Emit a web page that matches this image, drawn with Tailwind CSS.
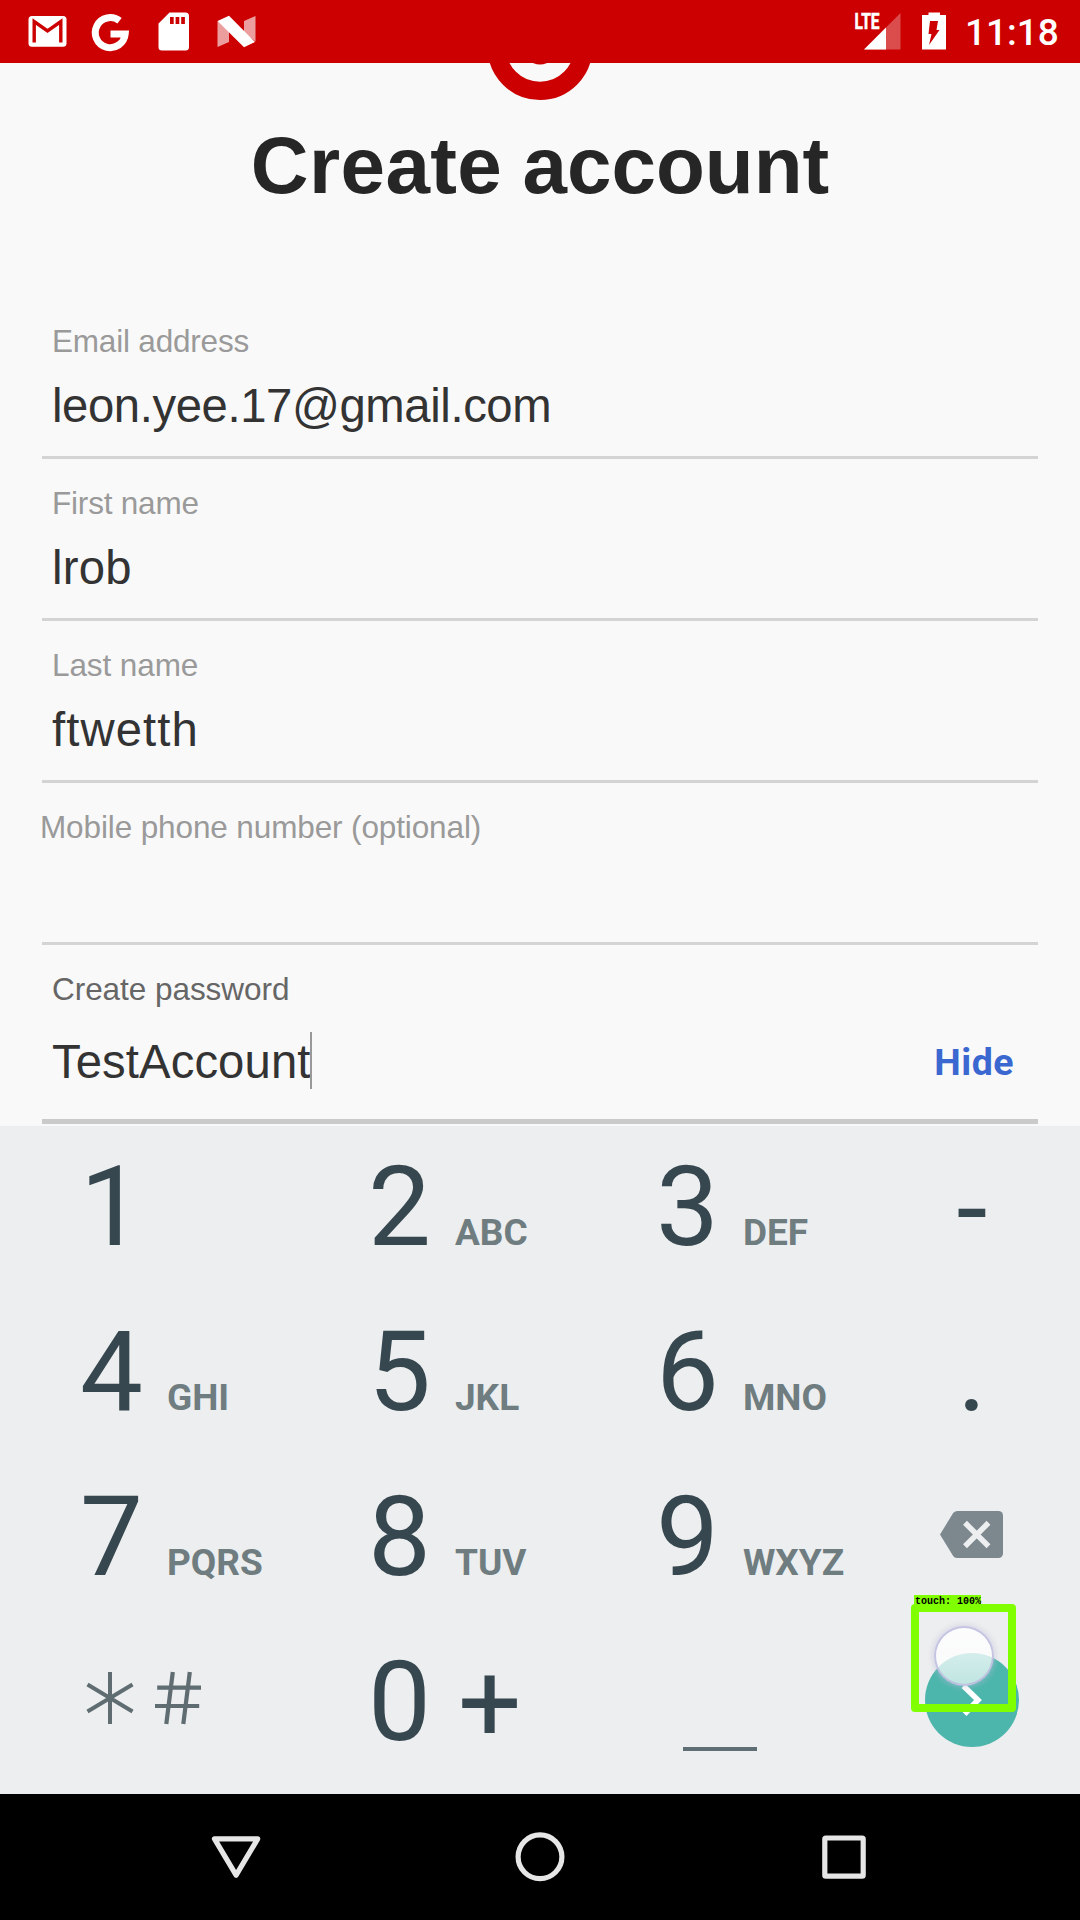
<!DOCTYPE html>
<html lang="en">
<head>
<meta charset="utf-8">
<title>Create account</title>
<script src="https://cdn.jsdelivr.net/npm/@tailwindcss/browser@4"></script>
</head>
<body class="bg-black">
<div class="relative w-[1080px] h-[1920px] overflow-hidden flex flex-col bg-[#f9f9f9] font-['Liberation_Sans',Arial,sans-serif] text-[#333333]">

  <!-- Status bar -->
  <header class="h-[63px] shrink-0 bg-[#cc0000] flex items-start justify-between text-white">
    <svg class="w-[270px] h-[63px]" viewBox="0 0 270 63" fill="#fff">
      <rect x="28.500" y="16" width="38" height="30.700" rx="3.500"/>
      <path d="M34.200 42.600V21.500L47.500 31L60.800 21.500V42.600" fill="none" stroke="#cc0000" stroke-width="3.400"/>
      <path d="M119.500 20.800A15 15 0 1 0 125.200 34H110.500" fill="none" stroke="#fff" stroke-width="7" stroke-linejoin="miter"/>
      <path d="M169.500 12.500H185.500a3.500 3.500 0 0 1 3.500 3.500V47a3.500 3.500 0 0 1-3.500 3.500H162a3.500 3.500 0 0 1-3.500-3.500V23.500Z"/>
      <path d="M170 17h3.700v7H170zM175.600 17h3.700v7h-3.700zM181.200 17h3.700v7h-3.700z" fill="#cc0000"/>
      <path d="M217.500 21L229 30V42L217.500 47ZM255.500 16V41.500L244 33V21Z" opacity=".62"/>
      <path d="M217.500 21L229 15.800L255 42L244 47.200Z"/>
    </svg>
    <div class="flex items-start">
      <svg class="w-[100px] h-[63px]" viewBox="852 0 100 63" fill="#fff">
        <path d="M864 49.500L900.500 13V49.500Z" opacity=".3"/>
        <path d="M864 49.500L886 27.500V49.500Z"/>
        <text x="854.500" y="28.700" font-family="Roboto, sans-serif" font-weight="700" font-size="21.500" textLength="25" lengthAdjust="spacingAndGlyphs" stroke="#fff" stroke-width=".6">LTE</text>
        <path d="M928.500 12.500H940V15H946V49.500H922V15H928.500Z"/>
        <path d="M930 21H938L936.500 30H939.500L929 45L931.500 34H928.500Z" fill="#cc0000"/>
      </svg>
      <div class="w-[128px] pl-[13px] pt-[11px] text-[37px] leading-[44px] font-medium font-[Roboto,sans-serif]">11:18</div>
    </div>
  </header>

  <!-- Brand mark, scrolled partly under the status bar -->
  <div class="absolute left-[487px] top-[63px] w-[106px] h-[38px] overflow-hidden">
    <svg class="w-[106px] h-[38px]" viewBox="487 63 106 38">
      <circle cx="540" cy="47.700" r="43.200" fill="none" stroke="#cc0000" stroke-width="18.300"/>
      <circle cx="540" cy="47.700" r="16.800" fill="#cc0000"/>
    </svg>
  </div>

  <main class="flex flex-col h-[1061px] shrink-0">
    <h1 class="h-[234px] pt-[63px] text-center text-[80px] leading-[80px] font-bold text-[#262626] [word-spacing:-2px]"><span class="tracking-[0.400px]">Create</span> <span>account</span></h1>

    <section class="h-[162px] mx-[42px] pt-6 px-[10px] border-b-[3px] border-[#d4d4d4] flex flex-col gap-[17px]">
      <label class="text-[31.500px] leading-[40px] tracking-[-0.200px] text-[#9a9a9a]">Email address</label>
      <div class="text-[47.250px] leading-[56px] tracking-[-0.400px]">leon.yee.17@gmail.com</div>
    </section>
    <section class="h-[162px] mx-[42px] pt-6 px-[10px] border-b-[3px] border-[#d4d4d4] flex flex-col gap-[17px]">
      <label class="text-[31.500px] leading-[40px] tracking-[-0.200px] text-[#9a9a9a]">First name</label>
      <div class="text-[47.250px] leading-[56px] tracking-[0.250px]">lrob</div>
    </section>
    <section class="h-[162px] mx-[42px] pt-6 px-[10px] border-b-[3px] border-[#d4d4d4] flex flex-col gap-[17px]">
      <label class="text-[31.500px] leading-[40px] tracking-[-0.100px] text-[#9a9a9a]">Last name</label>
      <div class="text-[47.250px] leading-[56px] tracking-[1.100px]">ftwetth</div>
    </section>
    <section class="h-[162px] mx-[42px] pt-6 border-b-[3px] border-[#d4d4d4]">
      <label class="block -ml-[2px] text-[31.500px] leading-[40px] tracking-[-0.120px] text-[#9a9a9a]">Mobile phone number (optional)</label>
    </section>
    <section class="h-[179px] mx-[42px] pt-6 pl-[10px] pr-[24px] border-b-[5px] border-[#cacaca] flex flex-col gap-[23px]">
      <label class="text-[31.500px] leading-[40px] tracking-[-0.050px] text-[#666666]">Create password</label>
      <div class="flex justify-between">
        <div class="flex">
          <div class="pt-[2px] text-[47.250px] leading-[56px] tracking-[0.100px]">TestAccount</div>
          <div class="w-[2px] h-[57px] bg-[#999999]"></div>
        </div>
        <div class="pt-[8px] text-[37.500px] leading-[44px] tracking-[0.500px] font-bold font-[Roboto,sans-serif] text-[#3a68d0]">Hide</div>
      </div>
    </section>
  </main>

  <!-- Numeric keyboard -->
  <div class="h-[670px] shrink-0 bg-[#eceeef] border-t-2 border-[#f6f8f9] grid grid-cols-[288px_288px_288px_216px] grid-rows-[165px_165px_165px_165px] font-[Roboto,sans-serif] text-[112px] leading-[112px] text-[#37474f]">
    <div class="flex items-baseline pl-[80px] pt-[25px] gap-[24px]"><span>1</span></div>
    <div class="flex items-baseline pl-[80px] pt-[25px] gap-[24px]"><span>2</span><span class="text-[37px] leading-[40px] font-bold text-[#6f7c80]">ABC</span></div>
    <div class="flex items-baseline pl-[80px] pt-[25px] gap-[24px]"><span>3</span><span class="text-[37px] leading-[40px] font-bold text-[#6f7c80]">DEF</span></div>
    <div class="pt-[27px] text-center">-</div>

    <div class="flex items-baseline pl-[80px] pt-[25px] gap-[24px]"><span>4</span><span class="text-[37px] leading-[40px] font-bold text-[#6f7c80]">GHI</span></div>
    <div class="flex items-baseline pl-[80px] pt-[25px] gap-[24px]"><span>5</span><span class="text-[37px] leading-[40px] font-bold text-[#6f7c80]">JKL</span></div>
    <div class="flex items-baseline pl-[80px] pt-[25px] gap-[24px]"><span>6</span><span class="text-[37px] leading-[40px] font-bold text-[#6f7c80]">MNO</span></div>
    <div class="pt-[25px] text-center">.</div>

    <div class="flex items-baseline pl-[80px] pt-[25px] gap-[24px]"><span>7</span><span class="text-[37px] leading-[40px] font-bold text-[#6f7c80]">PQRS</span></div>
    <div class="flex items-baseline pl-[80px] pt-[25px] gap-[24px]"><span>8</span><span class="text-[37px] leading-[40px] font-bold text-[#6f7c80]">TUV</span></div>
    <div class="flex items-baseline pl-[80px] pt-[25px] gap-[24px]"><span>9</span><span class="text-[37px] leading-[40px] font-bold text-[#6f7c80]">WXYZ</span></div>
    <svg class="w-[216px] h-[165px]" viewBox="864 1456 216 165">
      <path d="M957 1511H998.500a4.500 4.500 0 0 1 4.500 4.500V1553.500a4.500 4.500 0 0 1-4.500 4.500H957a5 5 0 0 1-4-2.300L940 1534.500L953 1513.300a5 5 0 0 1 4-2.300Z" fill="#7c888e"/>
      <path d="M965 1522.800L988.500 1546.300M988.500 1522.800L965 1546.300" stroke="#eceeef" stroke-width="5.500"/>
    </svg>

    <svg class="w-[288px] h-[165px]" viewBox="0 1621 288 165" fill="none" stroke="#5f6c71" stroke-width="4">
      <path d="M110 1672V1724M87.500 1684.500L132.500 1711.500M132.500 1684.500L87.500 1711.500"/>
      <path d="M172.800 1672L166.300 1724M189.800 1672L183.300 1724M157.200 1687.700H201M155 1706H199.200" stroke-width="4.200"/>
    </svg>
    <div class="flex items-start pl-[80px] pt-[25px] gap-[27px]"><span>0</span><span class="pt-px">+</span></div>
    <div class="pt-[126px] pl-[107px]"><div class="w-[74px] h-[4px] bg-[#5f6e74]"></div></div>
    <svg class="w-[216px] h-[165px]" viewBox="864 1621 216 165">
      <circle cx="972" cy="1700" r="47" fill="#4db6ac"/>
      <path d="M963.500 1686L978 1700L964.500 1714" fill="none" stroke="#fff" stroke-width="5.500"/>
    </svg>
  </div>

  <!-- Navigation bar -->
  <nav class="h-[126px] shrink-0 bg-black">
    <svg class="w-[1080px] h-[126px]" viewBox="0 1794 1080 126" fill="none" stroke="#e6e6e6" stroke-width="5.200" stroke-linejoin="round">
      <path d="M214.500 1838.800H257.700L236.100 1875.200Z"/>
      <circle cx="540" cy="1856.800" r="21.900"/>
      <rect x="824.800" y="1838" width="38.400" height="38.200" rx="1"/>
    </svg>
  </nav>

  <!-- Touch indicator with detection box -->
  <div class="absolute left-[934px] top-[1626px] w-[60px] h-[60px] rounded-full bg-linear-to-b from-white/85 to-white/65 border-2 border-[#b8b6dc]/80 shadow-[0_0_5px_2px_rgba(190,188,220,0.400)]"></div>
  <div class="absolute left-[911px] top-[1604px] w-[105px] h-[108px] border-8 border-[#80ff00] rounded-[4px]"></div>
  <div class="absolute left-[914px] top-[1595px] w-[67px] h-[11px] bg-[#80ff00] pl-px font-['Liberation_Mono',monospace] font-bold text-[10px] leading-[14px] text-black whitespace-nowrap">touch: 100%</div>
</div>
</body>
</html>
